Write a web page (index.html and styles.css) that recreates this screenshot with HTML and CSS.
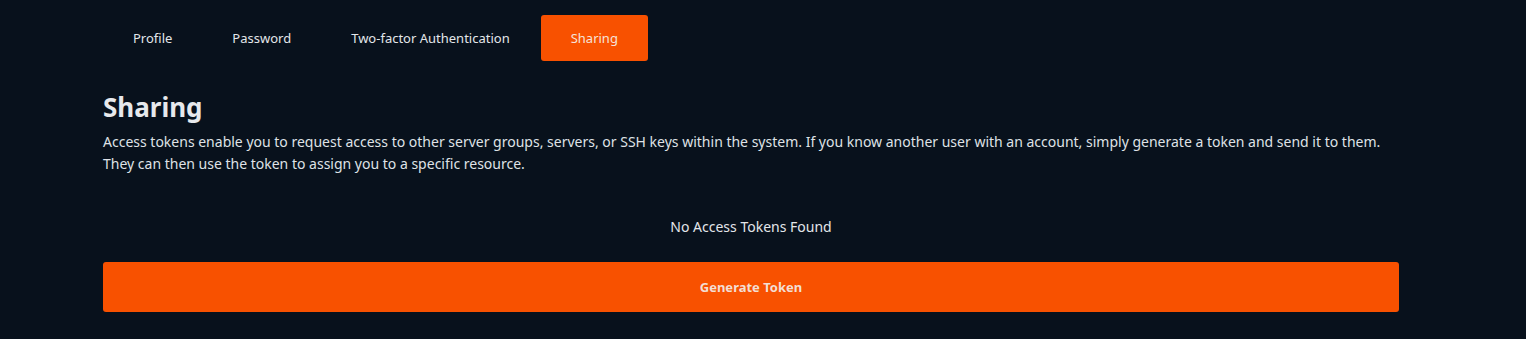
FILE: index.html
```html
<!DOCTYPE html>
<html>
<head>
  <meta charset="UTF-8">
  <title>Account - Sharing</title>
  <link rel="stylesheet" href="styles.css">
</head>
<body>
  <div class="page">
    <nav class="tabs">
      <a href="#" class="tab">Profile</a>
      <a href="#" class="tab">Password</a>
      <a href="#" class="tab">Two-factor Authentication</a>
      <a href="#" class="tab active">Sharing</a>
    </nav>

    <section class="sharing">
      <h1>Sharing</h1>
      <p class="intro">
        Access tokens enable you to request access to other server groups, servers, or SSH keys within the system. If you know another user with an account, simply generate a token and send it to them.
        They can then use the token to assign you to a specific resource.
      </p>
      <div class="empty">No Access Tokens Found</div>
      <button class="generate">Generate Token</button>
    </section>
  </div>
</body>
</html>
```

FILE: styles.css
```css
html, body {
  margin: 0;
  padding: 0;
  background: #08111c;
}
body {
  width: 1526px;
  height: 339px;
  overflow: hidden;
  font-family: "Noto Sans", "Open Sans", Arial, sans-serif;
  color: #e3e6ea;
}
.page {
  width: 1296px;
  padding: 15px 0 0 103px;
}
.tabs {
  display: flex;
  height: 46px;
}
.tab {
  display: flex;
  align-items: center;
  padding: 0 30px;
  font-size: 13px;
  color: #e3e6ea;
  text-decoration: none;
  border-radius: 3px;
}
.tab:first-child {
  padding-left: 30px;
}
.tab.active {
  margin-left: 1px;
  background: #f85100;
  color: #f6e3da;
}
.sharing h1 {
  margin: 30px 0 0;
  font-size: 26px;
  line-height: 32px;
  font-weight: 700;
  color: #e7e9ec;
}
.intro {
  margin: 8px 0 0;
  font-size: 14px;
  line-height: 22px;
  color: #dfe2e6;
}
.empty {
  margin-top: 41px;
  text-align: center;
  font-size: 14px;
  line-height: 22px;
}
.generate {
  display: block;
  width: 100%;
  height: 50px;
  margin-top: 24px;
  border: none;
  border-radius: 3px;
  background: #f85100;
  color: #f3ded4;
  font-family: inherit;
  font-size: 13px;
  font-weight: 700;
  cursor: pointer;
}
```
